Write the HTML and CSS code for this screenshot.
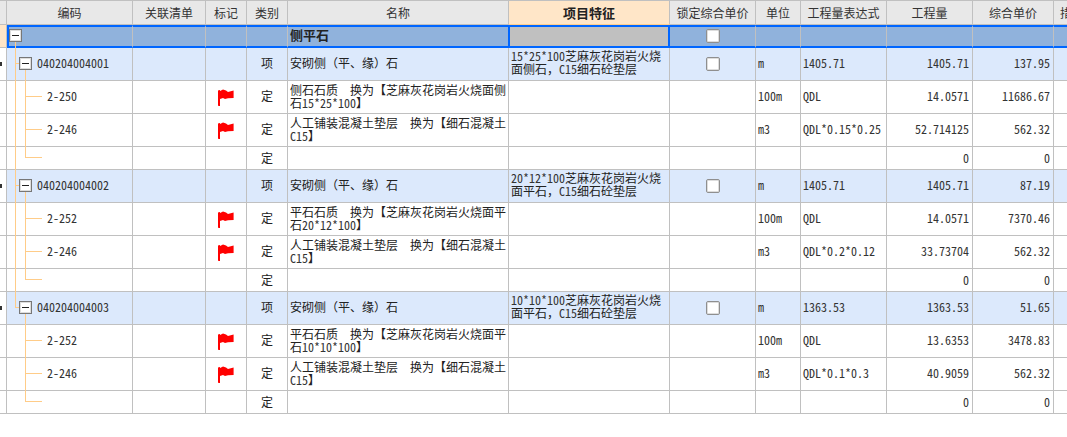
FILE: index.html
```html
<!DOCTYPE html>
<html lang="zh-CN">
<head>
<meta charset="utf-8">
<title>分部分项</title>
<link rel="stylesheet" href="styles.css">
</head>
<body>
<svg class="defs" width="0" height="0" aria-hidden="true"><symbol id="flag" viewBox="0 0 16 17"><path d="M0 1.5 2 1V17H0.6L0 16.5Z" fill="#f00"/><path d="M2 2 5 .6 8 1.6 10 3 15.6 1.6V9L10 9.2 7 10 5 9 2 10Z" fill="#f00"/></symbol></svg>
<table class="grid">
<colgroup><col class="c-stub"><col class="c-code"><col class="c-link"><col class="c-mark"><col class="c-type"><col class="c-name"><col class="c-feat"><col class="c-lock"><col class="c-unit"><col class="c-expr"><col class="c-qty"><col class="c-price"><col class="c-more"></colgroup>
<thead>
<tr><th></th><th>编码</th><th>关联清单</th><th>标记</th><th>类别</th><th>名称</th><th class="feat-head">项目特征</th><th>锁定综合单价</th><th>单位</th><th>工程量表达式</th><th>工程量</th><th>综合单价</th><th class="more-head">措施项目</th></tr>
</thead>
<tbody>
<tr class="sel">
<td class="stub"></td>
<td class="code"><span class="box box-top"></span><span class="tk1 tk1-top"></span></td>
<td></td><td></td><td></td>
<td class="name name-sel">侧平石</td>
<td class="feat-sel"></td>
<td class="chkcell"><span class="chk"></span></td>
<td></td><td></td><td></td><td></td><td></td>
</tr>

<tr class="item">
<td class="stub"><span class="mark"></span></td>
<td class="code code-item"><span class="tk1"></span><span class="br1"></span><span class="box"></span><span class="tk2-start"></span><span class="m">040204004001</span></td>
<td></td><td></td><td class="ctr">项</td>
<td class="name">安砌侧（平、缘）石</td>
<td class="name"><span class="m">15*25*100</span>芝麻灰花岗岩火烧<br>面侧石，<span class="m">C15</span>细石砼垫层</td>
<td class="chkcell"><span class="chk"></span></td>
<td class="txt"><span class="m">m</span></td><td class="txt"><span class="m">1405.71</span></td>
<td class="num"><span class="m">1405.71</span></td><td class="num"><span class="m">137.95</span></td><td></td>
</tr>
<tr class="child">
<td class="stub"></td>
<td class="code code-child"><span class="tk1"></span><span class="tk2"></span><span class="br2"></span><span class="m">2-250</span></td>
<td></td><td class="flagcell"><svg class="flag"><use href="#flag"/></svg></td><td class="ctr">定</td>
<td class="name">侧石石质　换为【芝麻灰花岗岩火烧面侧<br>石<span class="m">15*25*100</span>】</td>
<td></td><td></td>
<td class="txt"><span class="m">100m</span></td><td class="txt"><span class="m">QDL</span></td>
<td class="num"><span class="m">14.0571</span></td><td class="num"><span class="m">11686.67</span></td><td></td>
</tr>
<tr class="child">
<td class="stub"></td>
<td class="code code-child"><span class="tk1"></span><span class="tk2"></span><span class="br2"></span><span class="m">2-246</span></td>
<td></td><td class="flagcell"><svg class="flag"><use href="#flag"/></svg></td><td class="ctr">定</td>
<td class="name">人工铺装混凝土垫层　换为【细石混凝土<br><span class="m">C15</span>】</td>
<td></td><td></td>
<td class="txt"><span class="m">m3</span></td><td class="txt"><span class="m">QDL*0.15*0.25</span></td>
<td class="num"><span class="m">52.714125</span></td><td class="num"><span class="m">562.32</span></td><td></td>
</tr>
<tr class="short">
<td class="stub"></td>
<td class="code"><span class="tk1"></span><span class="tk2-end"></span><span class="br2-end"></span></td>
<td></td><td></td><td class="ctr">定</td><td></td><td></td><td></td><td></td><td></td>
<td class="num"><span class="m">0</span></td><td class="num"><span class="m">0</span></td><td></td>
</tr>

<tr class="item">
<td class="stub"><span class="mark"></span></td>
<td class="code code-item"><span class="tk1"></span><span class="br1"></span><span class="box"></span><span class="tk2-start"></span><span class="m">040204004002</span></td>
<td></td><td></td><td class="ctr">项</td>
<td class="name">安砌侧（平、缘）石</td>
<td class="name"><span class="m">20*12*100</span>芝麻灰花岗岩火烧<br>面平石，<span class="m">C15</span>细石砼垫层</td>
<td class="chkcell"><span class="chk"></span></td>
<td class="txt"><span class="m">m</span></td><td class="txt"><span class="m">1405.71</span></td>
<td class="num"><span class="m">1405.71</span></td><td class="num"><span class="m">87.19</span></td><td></td>
</tr>
<tr class="child">
<td class="stub"></td>
<td class="code code-child"><span class="tk1"></span><span class="tk2"></span><span class="br2"></span><span class="m">2-252</span></td>
<td></td><td class="flagcell"><svg class="flag"><use href="#flag"/></svg></td><td class="ctr">定</td>
<td class="name">平石石质　换为【芝麻灰花岗岩火烧面平<br>石<span class="m">20*12*100</span>】</td>
<td></td><td></td>
<td class="txt"><span class="m">100m</span></td><td class="txt"><span class="m">QDL</span></td>
<td class="num"><span class="m">14.0571</span></td><td class="num"><span class="m">7370.46</span></td><td></td>
</tr>
<tr class="child">
<td class="stub"></td>
<td class="code code-child"><span class="tk1"></span><span class="tk2"></span><span class="br2"></span><span class="m">2-246</span></td>
<td></td><td class="flagcell"><svg class="flag"><use href="#flag"/></svg></td><td class="ctr">定</td>
<td class="name">人工铺装混凝土垫层　换为【细石混凝土<br><span class="m">C15</span>】</td>
<td></td><td></td>
<td class="txt"><span class="m">m3</span></td><td class="txt"><span class="m">QDL*0.2*0.12</span></td>
<td class="num"><span class="m">33.73704</span></td><td class="num"><span class="m">562.32</span></td><td></td>
</tr>
<tr class="short">
<td class="stub"></td>
<td class="code"><span class="tk1"></span><span class="tk2-end"></span><span class="br2-end"></span></td>
<td></td><td></td><td class="ctr">定</td><td></td><td></td><td></td><td></td><td></td>
<td class="num"><span class="m">0</span></td><td class="num"><span class="m">0</span></td><td></td>
</tr>

<tr class="item">
<td class="stub"><span class="mark"></span></td>
<td class="code code-item"><span class="tk1 tk1-end"></span><span class="br1"></span><span class="box"></span><span class="tk2-start"></span><span class="m">040204004003</span></td>
<td></td><td></td><td class="ctr">项</td>
<td class="name">安砌侧（平、缘）石</td>
<td class="name"><span class="m">10*10*100</span>芝麻灰花岗岩火烧<br>面平石，<span class="m">C15</span>细石砼垫层</td>
<td class="chkcell"><span class="chk"></span></td>
<td class="txt"><span class="m">m</span></td><td class="txt"><span class="m">1363.53</span></td>
<td class="num"><span class="m">1363.53</span></td><td class="num"><span class="m">51.65</span></td><td></td>
</tr>
<tr class="child">
<td class="stub"></td>
<td class="code code-child"><span class="tk2"></span><span class="br2"></span><span class="m">2-252</span></td>
<td></td><td class="flagcell"><svg class="flag"><use href="#flag"/></svg></td><td class="ctr">定</td>
<td class="name">平石石质　换为【芝麻灰花岗岩火烧面平<br>石<span class="m">10*10*100</span>】</td>
<td></td><td></td>
<td class="txt"><span class="m">100m</span></td><td class="txt"><span class="m">QDL</span></td>
<td class="num"><span class="m">13.6353</span></td><td class="num"><span class="m">3478.83</span></td><td></td>
</tr>
<tr class="child">
<td class="stub"></td>
<td class="code code-child"><span class="tk2"></span><span class="br2"></span><span class="m">2-246</span></td>
<td></td><td class="flagcell"><svg class="flag"><use href="#flag"/></svg></td><td class="ctr">定</td>
<td class="name">人工铺装混凝土垫层　换为【细石混凝土<br><span class="m">C15</span>】</td>
<td></td><td></td>
<td class="txt"><span class="m">m3</span></td><td class="txt"><span class="m">QDL*0.1*0.3</span></td>
<td class="num"><span class="m">40.9059</span></td><td class="num"><span class="m">562.32</span></td><td></td>
</tr>
<tr class="short">
<td class="stub"></td>
<td class="code"><span class="tk2-end"></span><span class="br2-end"></span></td>
<td></td><td></td><td class="ctr">定</td><td></td><td></td><td></td><td></td><td></td>
<td class="num"><span class="m">0</span></td><td class="num"><span class="m">0</span></td><td></td>
</tr>
</tbody>
</table>
</body>
</html>
```
FILE: styles.css
```css
html, body {
  margin: 0;
  height: 437px;
  overflow: hidden;
  background: #fff;
}
.defs { position: absolute; }
.grid {
  table-layout: fixed;
  width: 1114px;
  border-collapse: separate;
  border-spacing: 0;
  font: 12px/13px "Noto Sans CJK SC", "Liberation Sans", sans-serif;
  color: #222;
}
.c-stub { width: 7px; }
.c-code { width: 126px; }
.c-link { width: 73px; }
.c-mark { width: 41px; }
.c-type { width: 41px; }
.c-name { width: 221px; }
.c-feat { width: 161px; }
.c-lock { width: 86px; }
.c-unit { width: 45px; }
.c-expr { width: 86px; }
.c-qty { width: 86px; }
.c-price { width: 81px; }
.c-more { width: 60px; }

th, td {
  box-sizing: border-box;
  padding: 0;
  border-right: 1px solid #c0c0c0;
  border-bottom: 1px solid #c0c0c0;
  overflow: hidden;
  white-space: nowrap;
}
th {
  height: 25px;
  border-top: 1px solid #c0c0c0;
  background: #e8e8e8;
  font-weight: 400;
  color: #333;
  text-align: center;
}
td {
  height: 33px;
  padding-bottom: 4px;
  position: relative;
  overflow: visible;
}
.short td { height: 23px; padding-bottom: 2px; }
.child td.name { padding-bottom: 2px; }
.item td { background: #dce9fc; }
.item td.stub { background: #fff; padding-bottom: 0; }
.feat-head {
  background: #ffe6c8;
  border-bottom-color: #ffcf8f;
  font-weight: 700;
  font-size: 13px;
  color: #222;
}
.more-head { text-align: left; padding-left: 6px; }

.sel td {
  height: 23px;
  padding-bottom: 5px;
  background: #90b2dc;
  border-top: 2px solid #06f;
  border-bottom: 2px solid #06f;
}
.sel td.stub {
  background: #ffe6c8;
  border-top: 0;
  border-bottom: 1px solid #c0c0c0;
}
.sel td.code { border-left: 2px solid #06f; }
.sel td.name-sel {
  font-weight: 700;
  font-size: 13px;
  border-right: 1px solid #06f;
}
.sel td.feat-sel {
  background: #c0c0c0;
  border-left: 1px solid #06f;
  border-right: 2px solid #06f;
}

td.name { padding-left: 2px; }
td.txt { padding-left: 2px; }
td.num { padding-right: 3px; text-align: right; }
td.ctr { text-align: center; }
td.code-item { padding-left: 30px; }
td.code-child { padding-left: 40px; }
td.chkcell { padding-bottom: 0; }
.sel td.chkcell { padding-bottom: 1px; }
td.flagcell { padding: 1px 0 0; }
.m {
  font-feature-settings: "hwid";
  color: #333;
}

.mark {
  display: block;
  width: 2px;
  height: 4px;
  background: #333;
}
.chk {
  display: block;
  box-sizing: border-box;
  width: 14px;
  height: 14px;
  margin: 0 auto;
  background: #fff;
  border: 1px solid #8f8f8f;
  border-radius: 2px;
  box-shadow: inset 0 0 0 1px #ddd;
}
.flag {
  display: block;
  width: 16px;
  height: 17px;
  margin: 0 auto;
}

.box {
  position: absolute;
  left: 12px;
  top: 9px;
  box-sizing: border-box;
  width: 13px;
  height: 13px;
  background: #fff;
  border: 1px solid #777;
  box-shadow: inset 0 0 0 1px #ddd;
}
.box::after {
  content: "";
  position: absolute;
  left: 2px;
  top: 5px;
  width: 7px;
  height: 1px;
  background: #222;
}
.box-top { left: 0; top: 2px; }
.tk1, .tk2, .tk2-start, .tk2-end, .br1, .br2, .br2-end {
  position: absolute;
  background: #ffcc88;
}
.tk1 { left: 8px; top: 0; bottom: -1px; width: 1px; }
.tk1-top { left: 6px; top: 15px; bottom: -2px; }
.tk1-end { bottom: auto; height: 16px; }
.br1 { left: 8px; top: 15px; width: 4px; height: 1px; }
.tk2 { left: 18px; top: 0; bottom: -1px; width: 1px; }
.tk2-start { left: 18px; top: 22px; bottom: -1px; width: 1px; }
.tk2-end { left: 18px; top: 0; width: 1px; height: 11px; }
.br2 { left: 18px; top: 15px; width: 17px; height: 1px; }
.br2-end { left: 18px; top: 10px; width: 17px; height: 1px; }
```
